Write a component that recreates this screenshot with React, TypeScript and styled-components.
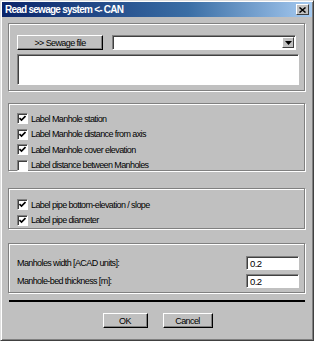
import React from 'react'
import styled, { createGlobalStyle } from 'styled-components'

const Global = createGlobalStyle`
body {
  margin: 0;
  background: #c0c0c0;
  font-family: 'Liberation Sans', Arial, sans-serif;
}
`

export const Window = styled.div`
width: 314px;
height: 341px;
box-sizing: border-box;
background: #c0c0c0;
border: 1px solid;
border-color: #dfdfdf #404040 #404040 #dfdfdf;
box-shadow: inset 1px 1px 0 #ffffff, inset -1px -1px 0 #808080;
display: flex;
flex-direction: column;
overflow: hidden;
`

export const TitleBar = styled.div`
margin: 1px 1px 0;
height: 15px;
display: flex;
align-items: center;
justify-content: space-between;
padding: 0 3px 0 3px;
background: linear-gradient(to right, #0a246a, #3a6ea5 60%, #a6caf0);
color: #ffffff;
font-weight: bold;
font-size: 10px;
letter-spacing: -0.75px;
`

export const CloseButton = styled.div`
width: 13px;
height: 11px;
box-sizing: border-box;
background: #c0c0c0;
border: 1px solid;
border-color: #ffffff #404040 #404040 #ffffff;
display: flex;
align-items: center;
justify-content: center;
`

export const Content = styled.div`
display: flex;
flex-direction: column;
padding: 6px 8px 0 7px;
font-size: 9px;
letter-spacing: -0.6px;
color: #000000;
`

export const Group = styled.div<{ $h: number; $top: number }>`
height: ${p => p.$h}px;
margin-top: ${p => p.$top}px;
box-sizing: border-box;
border: 1px solid #808080;
box-shadow: inset 1px 1px 0 #ffffff, 1px 1px 0 #ffffff;
padding: 0 5px 0 8px;
display: flex;
flex-direction: column;
`

export const FileRow = styled.div`
display: flex;
gap: 9px;
margin-top: 11px;
padding-right: 3px;
`

export const Button = styled.div<{ $w: number }>`
width: ${p => p.$w}px;
height: 15px;
box-sizing: border-box;
background: #c0c0c0;
border: 1px solid;
border-color: #ffffff #000000 #000000 #ffffff;
box-shadow: inset -1px -1px 0 #808080;
display: flex;
align-items: center;
justify-content: center;
font-size: 9px;
`

export const Combo = styled.div`
flex: 1;
height: 15px;
box-sizing: border-box;
background: #ffffff;
border: 1px solid;
border-color: #808080 #ffffff #ffffff #808080;
box-shadow: inset 1px 1px 0 #404040;
display: flex;
justify-content: flex-end;
padding: 1px;
`

export const ComboArrow = styled.div`
width: 12px;
height: 11px;
box-sizing: border-box;
background: #c0c0c0;
border: 1px solid;
border-color: #ffffff #404040 #404040 #ffffff;
display: flex;
align-items: center;
justify-content: center;
`

export const Memo = styled.div`
margin-top: 4px;
height: 31px;
box-sizing: border-box;
background: #ffffff;
border: 1px solid;
border-color: #808080 #ffffff #ffffff #808080;
box-shadow: inset 1px 1px 0 #404040;
`

export const CheckList = styled.div<{ $top: number }>`
display: flex;
flex-direction: column;
margin-top: ${p => p.$top}px;
`

export const CheckRow = styled.div`
height: 15.5px;
display: flex;
align-items: center;
gap: 3px;
`

export const Box = styled.div`
width: 11px;
height: 11px;
box-sizing: border-box;
background: #ffffff;
border: 1px solid;
border-color: #808080 #ffffff #ffffff #808080;
box-shadow: inset 1px 1px 0 #404040;
display: flex;
align-items: center;
justify-content: center;
`

export const FieldRow = styled.div<{ $top: number }>`
margin-top: ${p => p.$top}px;
height: 14px;
display: flex;
align-items: center;
justify-content: space-between;
`

export const Field = styled.div`
width: 53px;
height: 14px;
box-sizing: border-box;
background: #ffffff;
border: 1px solid;
border-color: #808080 #ffffff #ffffff #808080;
box-shadow: inset 1px 1px 0 #404040;
padding: 0 3px;
display: flex;
align-items: center;
font-size: 9.5px;
`

export const Divider = styled.div`
margin: 7px 0 0 1px;
height: 2px;
background: #000000;
`

export const ButtonBar = styled.div`
margin-top: 11px;
display: flex;
justify-content: center;
gap: 15px;
padding-left: 2px;
`

function Check({ on, label }: { on: boolean; label: string }) {
  return (
    <CheckRow>
      <Box>
        {on && (
          <svg width="7" height="7" viewBox="0 0 7 7">
            <path d="M0.5 3 L2.5 5 L6.5 1" stroke="#000" strokeWidth="1.6" fill="none" />
          </svg>
        )}
      </Box>
      <span>{label}</span>
    </CheckRow>
  )
}

export default function App() {
  return (
    <>
      <Global />
      <Window>
        <TitleBar>
          <span>Read sewage system &lt;- CAN</span>
          <CloseButton>
            <svg width="7" height="6" viewBox="0 0 7 6">
              <path d="M0.5 0.5 L6.5 5.5 M6.5 0.5 L0.5 5.5" stroke="#000" strokeWidth="1.5" />
            </svg>
          </CloseButton>
        </TitleBar>
        <Content>
          <Group $h={68} $top={0}>
            <FileRow>
              <Button $w={86}>&gt;&gt; Sewage file</Button>
              <Combo>
                <ComboArrow>
                  <svg width="7" height="4" viewBox="0 0 7 4">
                    <path d="M0 0 H7 L3.5 4 Z" fill="#000" />
                  </svg>
                </ComboArrow>
              </Combo>
            </FileRow>
            <Memo />
          </Group>

          <Group $h={68} $top={12}>
            <CheckList $top={7}>
              <Check on label="Label Manhole station" />
              <Check on label="Label Manhole distance from axis" />
              <Check on label="Label Manhole cover elevation" />
              <Check on={false} label="Label distance between Manholes" />
            </CheckList>
          </Group>

          <Group $h={41} $top={17}>
            <CheckList $top={8}>
              <Check on label="Label pipe bottom-elevation / slope" />
              <Check on label="Label pipe diameter" />
            </CheckList>
          </Group>

          <Group $h={50} $top={14}>
            <FieldRow $top={12}>
              <span>Manholes width [ACAD units]:</span>
              <Field>0.2</Field>
            </FieldRow>
            <FieldRow $top={4}>
              <span>Manhole-bed thickness [m]:</span>
              <Field>0.2</Field>
            </FieldRow>
          </Group>

          <Divider />

          <ButtonBar>
            <Button $w={45}>OK</Button>
            <Button $w={50}>Cancel</Button>
          </ButtonBar>
        </Content>
      </Window>
    </>
  )
}
